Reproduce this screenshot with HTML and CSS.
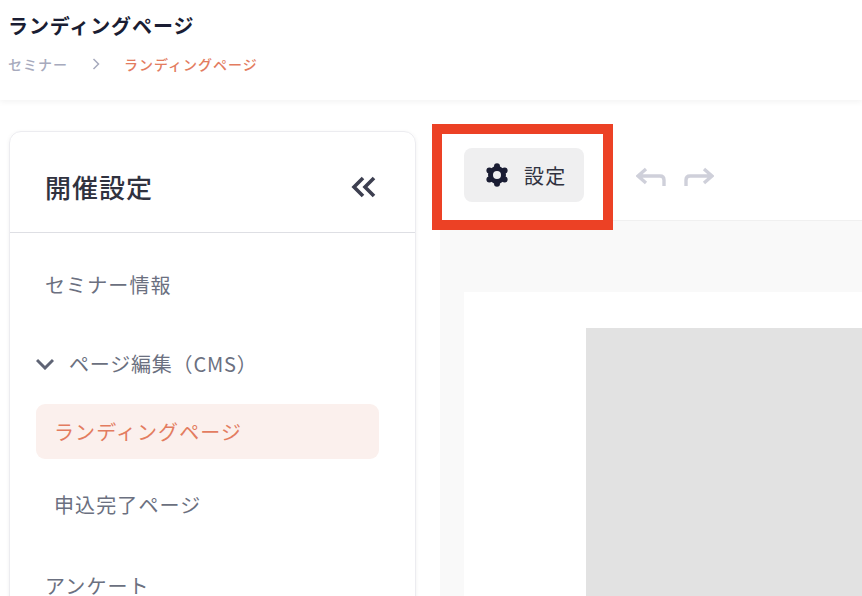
FILE: index.html
```html
<!DOCTYPE html>
<html lang="ja">

<head>
    <meta charset="UTF-8">
    <meta name="viewport" content="width=device-width, initial-scale=1.0">
    <title>ランディングページ</title>
    <link rel="stylesheet" href="styles.css">
</head>

<body>
    <!-- ページヘッダー -->
    <header class="page-header">
        <h1 class="page-title">ランディングページ</h1>
        <nav class="crumbs">
            <span class="crumb">セミナー</span>
            <svg class="crumb-sep" viewBox="0 0 8 12"><path d="M1.5 1 L6.5 6 L1.5 11"/></svg>
            <span class="crumb crumb-current">ランディングページ</span>
        </nav>
    </header>

    <div class="main">
        <!-- サイドバー -->
        <aside class="side-card">
            <div class="side-head">
                <h2 class="side-title">開催設定</h2>
                <svg class="collapse-icon" viewBox="0 0 26 22"><path d="M12 2 L3 11 L12 20 M23 2 L14 11 L23 20"/></svg>
            </div>
            <ul class="side-menu">
                <li class="menu-item">セミナー情報</li>
                <li class="menu-item menu-group">
                    <svg class="group-arrow" viewBox="0 0 18 12"><path d="M1 2 L9 10 L17 2"/></svg>
                    ページ編集（CMS）
                </li>
                <li class="sub-item sub-active">ランディングページ</li>
                <li class="sub-item">申込完了ページ</li>
                <li class="menu-item menu-last">アンケート</li>
            </ul>
        </aside>

        <!-- 編集エリア -->
        <section class="editor">
            <div class="toolbar">
                <button class="settings-btn">
                    <svg class="gear" viewBox="0 0 24 24">
                        <circle class="gear-ring" cx="12" cy="12" r="6.5"/>
                        <circle cx="12" cy="3.2" r="3"/>
                        <circle cx="19.6" cy="7.6" r="3"/>
                        <circle cx="19.6" cy="16.4" r="3"/>
                        <circle cx="12" cy="20.8" r="3"/>
                        <circle cx="4.4" cy="16.4" r="3"/>
                        <circle cx="4.4" cy="7.6" r="3"/>
                    </svg>
                    <span>設定</span>
                </button>
                <svg class="history-icon" viewBox="0 0 30 20"><path d="M10 2 L2 9 L10 16 M2 9 H24 Q28 9 28 13 V19"/></svg>
                <svg class="history-icon" viewBox="0 0 30 20"><path d="M20 2 L28 9 L20 16 M28 9 H6 Q2 9 2 13 V19"/></svg>
            </div>
            <div class="canvas">
                <div class="lp-page">
                    <div class="lp-image"></div>
                </div>
            </div>
        </section>
    </div>

    <!-- 注釈の赤枠 -->
    <div class="mark-box"></div>
</body>

</html>
```

FILE: styles.css
```css
/* 全体 */
body {
    margin: 0;
    height: 596px;
    overflow: hidden;
    background: #fff;
    font-family: "Noto Sans CJK JP", "Noto Sans", sans-serif;
    color: #6b7080;
}

/* ページヘッダー */
.page-header {
    height: 100px;
    box-sizing: border-box;
    padding: 11px 8px 0;
    box-shadow: 0 2px 6px rgba(0, 0, 0, 0.05);
}

.page-title {
    margin: 0;
    font-size: 20px;
    line-height: 30px;
    font-weight: 700;
    letter-spacing: 0.9px;
    color: #1a1d33;
}

.crumbs {
    display: flex;
    align-items: center;
    margin-top: 13px;
    font-size: 14px;
    line-height: 20px;
    font-weight: 500;
    letter-spacing: 1px;
}

.crumb {
    color: #a7aabd;
}

.crumb-current {
    color: #e37c60;
}

.crumb-sep {
    width: 8px;
    height: 12px;
    margin: 0 24px 0 24px;
    fill: none;
    stroke: #a7aabd;
    stroke-width: 1.5;
}

/* レイアウト */
.main {
    display: flex;
    gap: 24px;
    padding: 31px 0 0 9px;
}

/* サイドバー */
.side-card {
    width: 407px;
    flex-shrink: 0;
    height: 480px;
    box-sizing: border-box;
    border: 1px solid #ececf0;
    border-radius: 12px;
    box-shadow: 0 1px 4px rgba(0, 0, 0, 0.06);
}

.side-head {
    display: flex;
    align-items: center;
    justify-content: space-between;
    height: 101px;
    box-sizing: border-box;
    padding: 9px 38px 0 35px;
    border-bottom: 1px solid #dedfe4;
}

.side-title {
    margin: 0;
    font-size: 26px;
    line-height: 36px;
    font-weight: 500;
    letter-spacing: 1px;
    color: #30323f;
}

.collapse-icon {
    width: 26px;
    height: 22px;
    fill: none;
    stroke: #3d3f50;
    stroke-width: 3.6;
}

.side-menu {
    list-style: none;
    margin: 0;
    padding: 0;
    font-size: 20px;
    letter-spacing: 1.1px;
}

.menu-item {
    display: flex;
    align-items: center;
    padding-left: 35px;
    line-height: 30px;
    margin-top: 37px;
}

.menu-group {
    margin-top: 49px;
    padding-left: 26px;
    letter-spacing: 0.8px;
}

.menu-last {
    margin-top: 39px;
}

.group-arrow {
    width: 18px;
    height: 12px;
    margin-right: 15px;
    fill: none;
    stroke: #5f6475;
    stroke-width: 3;
}

.sub-item {
    margin: 0 36px 0 26px;
    padding-left: 18px;
    height: 55px;
    line-height: 55px;
    border-radius: 9px;
}

.sub-active {
    margin-top: 25px;
    margin-bottom: 18px;
    background: #fbf0ed;
    color: #e37c60;
}

/* 編集エリア */
.editor {
    flex: 1;
    min-width: 0;
}

.toolbar {
    display: flex;
    align-items: flex-start;
    height: 90px;
    box-sizing: border-box;
    padding: 17px 0 0 24px;
    border-bottom: 1px solid #f0f0f0;
}

.settings-btn {
    display: flex;
    align-items: center;
    gap: 15px;
    width: 120px;
    height: 54px;
    padding: 0 0 0 21px;
    margin-right: 52px;
    border: none;
    border-radius: 8px;
    background: #efeff0;
    font-family: inherit;
    font-size: 20px;
    letter-spacing: 1.3px;
    color: #30323f;
}

.gear {
    width: 24px;
    height: 24px;
    fill: #1a1d33;
}

.gear-ring {
    fill: none;
    stroke: #1a1d33;
    stroke-width: 5;
}

.history-icon {
    width: 30px;
    height: 20px;
    margin: 19px 18px 0 0;
    fill: none;
    stroke: #cfd0da;
    stroke-width: 3.4;
}

.canvas {
    height: 376px;
    padding: 71px 0 0 24px;
    box-sizing: border-box;
    background: #f9f9f9;
}

.lp-page {
    height: 100%;
    padding: 36px 0 0 122px;
    box-sizing: border-box;
    background: #fff;
}

.lp-image {
    height: 100%;
    background: #e2e2e2;
}

/* 注釈 */
.mark-box {
    position: absolute;
    left: 432px;
    top: 124px;
    width: 161px;
    height: 86px;
    border: 10px solid #ec4125;
}
```
